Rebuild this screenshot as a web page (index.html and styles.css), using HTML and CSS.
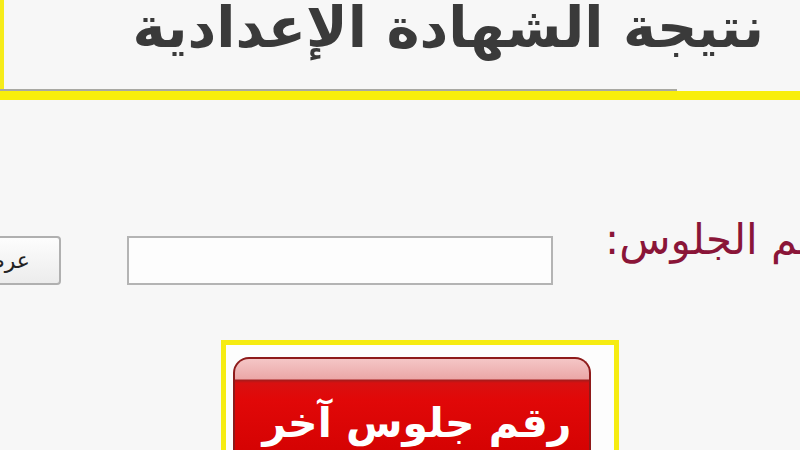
FILE: index.html
```html
<!DOCTYPE html>
<html lang="ar" dir="rtl">
<head>
<meta charset="utf-8">
<title>نتيجة الشهادة الإعدادية</title>
<link rel="stylesheet" href="styles.css">
</head>
<body>
<div class="page">
  <header class="head">
    <h1 class="title">نتيجة الشهادة الإعدادية</h1>
  </header>
  <div class="rule-gray"></div>
  <div class="rule-yellow"></div>

  <form class="form-row">
    <label class="label" for="seat">رقم الجلوس:</label>
    <input class="seat-input" id="seat" type="text">
    <button class="show-btn" type="button">عرض</button>
  </form>

  <div class="frame">
    <a class="red-btn" href="#">رقم جلوس آخر</a>
  </div>
</div>
</body>
</html>
```

FILE: styles.css
```css
html, body {
  margin: 0;
  padding: 0;
  overflow: hidden;
  background: #f7f7f7;
  height: 450px;
}
.page {
  font-family: "DejaVu Sans", sans-serif;
  width: 800px;
}
.head {
  height: 89px;
  border-left: 4px solid #f6ec1a;
  box-sizing: border-box;
  padding-right: 36px;
  display: flex;
  align-items: flex-start;
}
.title {
  margin: -5px 0 0 0;
  font-size: 56px;
  line-height: normal;
  font-weight: bold;
  color: #3a3a3a;
  white-space: nowrap;
}
.rule-gray {
  height: 2px;
  width: 677px;
  margin-right: auto;
  margin-left: 0;
  background: #a9a9a3;
}
.rule-yellow {
  height: 9px;
  background: #f8ee0c;
}
.form-row {
  display: flex;
  align-items: center;
  margin: 136px -45px 0 0;
  height: 49px;
}
.label {
  flex: 0 0 240px;
  align-self: flex-start;
  margin: -21px 0 0 52px;
  text-align: left;
  font-size: 42px;
  line-height: normal;
  color: #8a1538;
  white-space: nowrap;
}
.seat-input {
  flex: 0 0 auto;
  width: 426px;
  height: 49px;
  box-sizing: border-box;
  border: 2px solid #b4b4b4;
  background: #fdfdfd;
  margin: 0 0 0 66px;
  padding: 0 8px;
}
.show-btn {
  flex: 0 0 130px;
  height: 49px;
  box-sizing: border-box;
  border: 2px solid #b0b0b0;
  border-radius: 4px;
  background: linear-gradient(#fdfdfd, #ececec);
  font-family: "DejaVu Sans", sans-serif;
  font-size: 22px;
  color: #222;
  text-align: right;
  padding: 0 29px 0 0;
  white-space: nowrap;
  overflow: hidden;
}
.frame {
  margin: 55px 181px 0 0;
  width: 398px;
  height: 140px;
  box-sizing: border-box;
  border: 5px solid #f6ec12;
  border-bottom: none;
  background: #fdfdfd;
  padding: 12px 23px 0 7px;
}
.red-btn {
  display: block;
  height: 120px;
  box-sizing: border-box;
  border: 2px solid #8e1a1a;
  border-bottom: none;
  border-radius: 16px 16px 0 0;
  background: linear-gradient(to bottom, #f4c6c6 0, #eba7a7 20px, #a51c1c 21px, #d81010 24px, #e10808 40px, #cf0000 100%);
  color: #fff;
  font-weight: bold;
  font-size: 41px;
  line-height: normal;
  padding: 40px 0 0 10px;
  text-align: center;
  text-decoration: none;
  white-space: nowrap;
}
```
